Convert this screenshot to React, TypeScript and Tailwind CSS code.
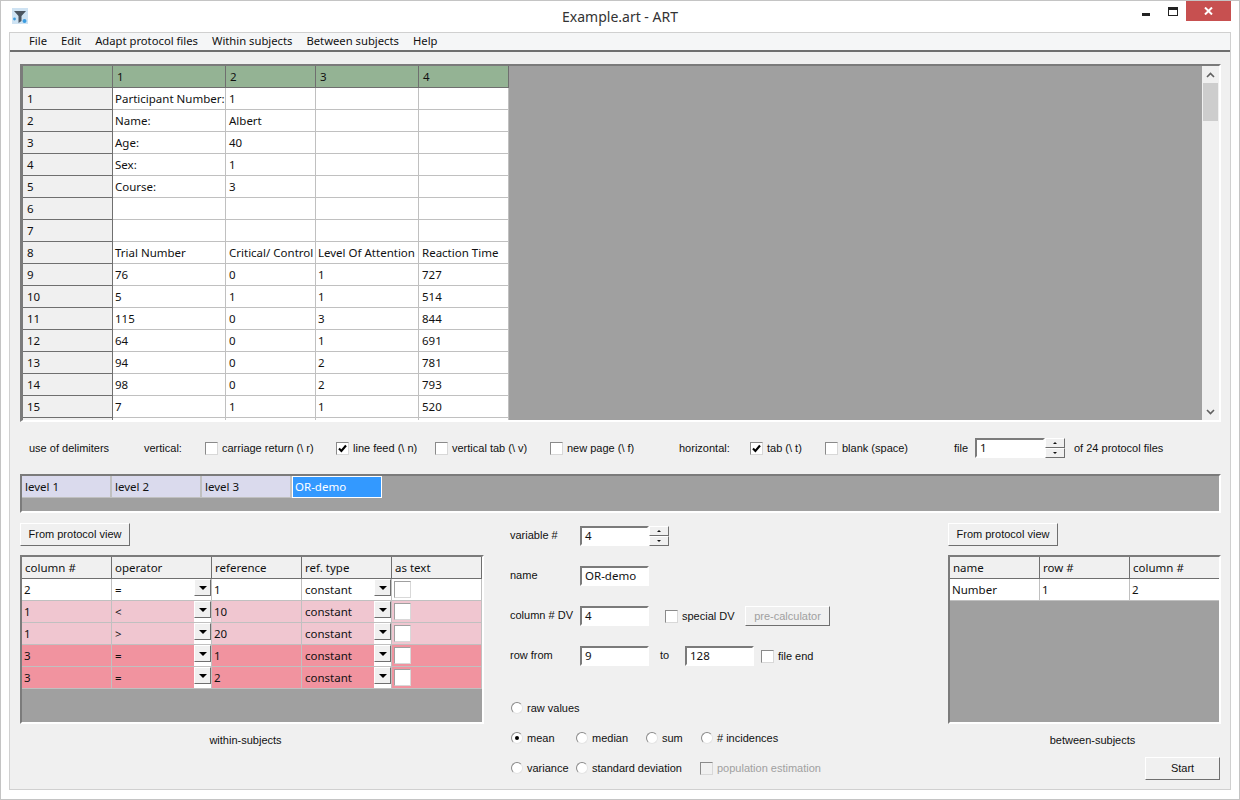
import type { ReactNode } from "react";

const font = "font-['Noto_Sans',sans-serif]";
const label = "font-['Liberation_Sans',sans-serif] text-[11px]";

const menus = ["File", "Edit", "Adapt protocol files", "Within subjects", "Between subjects", "Help"];

const protocolRows = [
  ["Participant Number:", "1", "", ""],
  ["Name:", "Albert", "", ""],
  ["Age:", "40", "", ""],
  ["Sex:", "1", "", ""],
  ["Course:", "3", "", ""],
  ["", "", "", ""],
  ["", "", "", ""],
  ["Trial Number", "Critical/ Control", "Level Of Attention", "Reaction Time"],
  ["76", "0", "1", "727"],
  ["5", "1", "1", "514"],
  ["115", "0", "3", "844"],
  ["64", "0", "1", "691"],
  ["94", "0", "2", "781"],
  ["98", "0", "2", "793"],
  ["7", "1", "1", "520"],
  ["", "", "", ""],
];

const conditions = [
  { col: "2", op: "=", ref: "1", bg: "bg-white" },
  { col: "1", op: "<", ref: "10", bg: "bg-[#f0c6d0]" },
  { col: "1", op: ">", ref: "20", bg: "bg-[#f0c6d0]" },
  { col: "3", op: "=", ref: "1", bg: "bg-[#f1939f]" },
  { col: "3", op: "=", ref: "2", bg: "bg-[#f1939f]" },
];

const sunken = "border-2 border-t-[#7b7b7b] border-l-[#7b7b7b] border-r-white border-b-white";
const raised = "border border-t-white border-l-white border-r-[#6f6f6f] border-b-[#6f6f6f]";

function Check({ on, disabled }: { on?: boolean; disabled?: boolean }) {
  return (
    <span
      className={`flex h-[13px] w-[13px] shrink-0 items-center justify-center border border-t-[#8a8a8a] border-l-[#8a8a8a] border-r-[#d8d8d8] border-b-[#d8d8d8] ${
        disabled ? "bg-[#f0f0f0]" : "bg-white"
      }`}
    >
      {on && (
        <svg viewBox="0 0 9 9" className="h-[9px] w-[9px]">
          <path d="M1 4.5 L3.4 7 L8 1.5" fill="none" stroke="#000" strokeWidth="2.1" />
        </svg>
      )}
    </span>
  );
}

function Radio({ on }: { on?: boolean }) {
  return (
    <span className="flex h-[12px] w-[12px] shrink-0 items-center justify-center rounded-full border border-t-[#8a8a8a] border-l-[#8a8a8a] border-r-[#e4e4e4] border-b-[#e4e4e4] bg-white">
      {on && <span className="h-[4px] w-[4px] rounded-full bg-black" />}
    </span>
  );
}

function Spin() {
  return (
    <div className="flex h-[20px] w-[20px] shrink-0 flex-col">
      {["M0 3 L2 1 L4 3", "M0 1 L2 3 L4 1"].map((d) => (
        <span key={d} className={`flex h-[10px] items-center justify-center bg-[#f0f0f0] ${raised}`}>
          <svg viewBox="0 0 4 4" className="h-[4px] w-[4px]">
            <path d={d} fill="#111" />
          </svg>
        </span>
      ))}
    </div>
  );
}

function Input({ value, w = "w-[69px]" }: { value: string; w?: string }) {
  return (
    <div className={`flex h-[20px] shrink-0 items-center bg-white pl-[3px] ${w} ${sunken}`}>{value}</div>
  );
}

function Button({ children, className }: { children: ReactNode; className: string }) {
  return (
    <button className={`flex items-center justify-center bg-[#f0f0f0] ${label} ${raised} ${className}`}>{children}</button>
  );
}

function Labeled({ box, text, w, muted }: { box: ReactNode; text: string; w: string; muted?: boolean }) {
  return (
    <div className={`flex shrink-0 items-center gap-[4px] ${w} ${muted ? "text-[#a0a0a0]" : ""}`}>
      {box}
      <span className={`whitespace-nowrap ${label}`}>{text}</span>
    </div>
  );
}

function Caption({ text, w }: { text: string; w: string }) {
  return <span className={`shrink-0 whitespace-nowrap ${label} ${w}`}>{text}</span>;
}

function ComboCell({ text, w }: { text: string; w: string }) {
  return (
    <div className={`relative flex shrink-0 items-center border-r border-b border-[#c0c0c0] pt-px pl-[3px] ${w}`}>
      {text}
      <span className="absolute top-0 right-0 h-full w-[17px] bg-white" />
      <span className={`absolute top-0 right-0 flex h-[17px] w-[17px] items-center justify-center bg-[#f0f0f0] ${raised}`}>
        <svg viewBox="0 0 8 4" className="h-[4px] w-[8px]">
          <path d="M0 0 H8 L4 4 Z" fill="#000" />
        </svg>
      </span>
    </div>
  );
}

function HeadCell({ text, w }: { text: string; w: string }) {
  return (
    <div className={`flex shrink-0 items-center border-r border-b border-[#6f6f6f] bg-[#f0f0f0] pl-[3px] ${w}`}>{text}</div>
  );
}

function ProtocolGrid() {
  const widths = ["w-[113px]", "w-[90px]", "w-[103px]", "w-[90px]"];
  const pads = ["pl-[2px]", "pl-[3px]", "pl-[2px]", "pl-[3px]"];
  return (
    <div className={`flex h-[358px] overflow-hidden bg-[#a0a0a0] ${sunken} border-l-[3px]`}>
      <div className="flex-1 overflow-hidden">
        <div className="flex h-[22px]">
          <div className="w-[90px] shrink-0 border-r border-b border-[#6f6f6f] bg-[#94b394]" />
          {["1", "2", "3", "4"].map((h, i) => (
            <div
              key={h}
              className={`flex shrink-0 items-center border-r border-b border-[#6f6f6f] bg-[#94b394] pl-[4px] ${widths[i]}`}
            >
              {h}
            </div>
          ))}
        </div>
        {protocolRows.map((row, r) => (
          <div key={r} className="flex h-[22px]">
            <div className="flex w-[90px] shrink-0 items-center border-r border-b border-[#6f6f6f] bg-[#f0f0f0] pl-[4px]">
              {r < 15 ? r + 1 : ""}
            </div>
            {row.map((cell, c) => (
              <div
                key={c}
                className={`flex shrink-0 items-center overflow-hidden whitespace-nowrap border-r border-b border-[#c0c0c0] bg-white ${pads[c]} ${widths[c]}`}
              >
                {cell}
              </div>
            ))}
          </div>
        ))}
      </div>
      <div className="flex w-[17px] shrink-0 flex-col bg-[#f0f0f0]">
        <div className="flex h-[17px] items-center justify-center">
          <svg viewBox="0 0 9 6" className="h-[6px] w-[9px]">
            <path d="M1 5 L4.5 1.5 L8 5" fill="none" stroke="#606060" strokeWidth="1.6" />
          </svg>
        </div>
        <div className="mx-px h-[38px] bg-[#cdcdcd]" />
        <div className="flex-1" />
        <div className="flex h-[17px] items-center justify-center">
          <svg viewBox="0 0 9 6" className="h-[6px] w-[9px]">
            <path d="M1 1 L4.5 4.5 L8 1" fill="none" stroke="#606060" strokeWidth="1.6" />
          </svg>
        </div>
      </div>
    </div>
  );
}

function DelimiterRow() {
  return (
    <div className="flex h-[52px] items-center pl-[9px]">
      <Caption w="w-[115px]" text="use of delimiters" />
      <Caption w="w-[61px]" text="vertical:" />
      <Labeled w="w-[131px]" box={<Check />} text="carriage return (\ r)" />
      <Labeled w="w-[99px]" box={<Check on />} text="line feed (\ n)" />
      <Labeled w="w-[115px]" box={<Check />} text="vertical tab (\ v)" />
      <Labeled w="w-[129px]" box={<Check />} text="new page (\ f)" />
      <Caption w="w-[71px]" text="horizontal:" />
      <Labeled w="w-[75px]" box={<Check on />} text="tab (\ t)" />
      <Labeled w="w-[129px]" box={<Check />} text="blank (space)" />
      <Caption w="w-[21px]" text="file" />
      <Input value="1" w="w-[70px]" />
      <Spin />
      <Caption w="ml-[9px]" text="of 24 protocol files" />
    </div>
  );
}

function LevelStrip() {
  return (
    <div className={`flex h-[39px] items-start bg-[#a0a0a0] ${sunken}`}>
      {["level 1", "level 2", "level 3"].map((l) => (
        <div key={l} className="flex h-[22px] w-[90px] items-center border-r-2 border-b border-[#c0c0c0] bg-[#dadaed] pl-[3px]">
          {l}
        </div>
      ))}
      <div className="flex h-[22px] w-[90px] items-center border border-white bg-[#3399ff] pl-[2px] text-white">OR-demo</div>
    </div>
  );
}

function WithinPanel() {
  return (
    <div className="w-[464px] shrink-0">
      <Button className="h-[23px] w-[110px]">From protocol view</Button>
      <div className={`mt-[9px] h-[169px] overflow-hidden bg-[#a0a0a0] ${sunken}`}>
        <div className="flex h-[22px]">
          <HeadCell text="column #" w="w-[90px]" />
          <HeadCell text="operator" w="w-[100px]" />
          <HeadCell text="reference" w="w-[90px]" />
          <HeadCell text="ref. type" w="w-[90px]" />
          <HeadCell text="as text" w="w-[90px]" />
        </div>
        {conditions.map((c, i) => (
          <div key={i} className={`flex h-[22px] ${c.bg}`}>
            <div className="flex w-[90px] shrink-0 items-center border-r border-b border-[#c0c0c0] pl-[2px]">{c.col}</div>
            <ComboCell text={c.op} w="w-[100px]" />
            <div className="flex w-[90px] shrink-0 items-center border-r border-b border-[#c0c0c0] pl-[2px]">{c.ref}</div>
            <ComboCell text="constant" w="w-[90px]" />
            <div className="flex w-[90px] shrink-0 items-start border-r border-b border-[#c0c0c0] pt-[2px] pl-[2px]">
              <span className="h-[17px] w-[17px] border border-[#d8d8d8] border-t-[#a0a0a0] border-l-[#a0a0a0] bg-white" />
            </div>
          </div>
        ))}
      </div>
      <div className={`mt-[11px] pr-[13px] text-center ${label}`}>within-subjects</div>
    </div>
  );
}

function VariablePanel() {
  return (
    <div className="ml-[26px] w-[438px] shrink-0 pt-[3px]">
      <div className="flex flex-col gap-[20px]">
        <div className="flex items-center">
          <Caption w="w-[70px] pb-[2px]" text="variable #" />
          <Input value="4" />
          <Spin />
        </div>
        <div className="flex items-center">
          <Caption w="w-[70px] pb-[2px]" text="name" />
          <Input value="OR-demo" />
        </div>
        <div className="flex items-center">
          <Caption w="w-[70px] pb-[2px]" text="column # DV" />
          <Input value="4" />
          <span className="w-[16px]" />
          <Labeled w="w-[80px]" box={<Check />} text="special DV" />
          <Button className="h-[20px] w-[85px] text-[#a0a0a0]">pre-calculator</Button>
        </div>
        <div className="flex items-center">
          <Caption w="w-[70px] pb-[2px]" text="row from" />
          <Input value="9" />
          <Caption w="ml-[11px] w-[25px] pb-[2px]" text="to" />
          <Input value="128" />
          <span className="w-[7px]" />
          <Labeled w="w-[80px]" box={<Check />} text="file end" />
        </div>
      </div>
      <div className="mt-[34px] flex flex-col gap-[14px]">
        <div className="flex h-[16px] items-center pl-px">
          <Labeled w="w-[65px]" box={<Radio />} text="raw values" />
        </div>
        <div className="flex h-[16px] items-center pl-px">
          <Labeled w="w-[65px]" box={<Radio on />} text="mean" />
          <Labeled w="w-[70px]" box={<Radio />} text="median" />
          <Labeled w="w-[55px]" box={<Radio />} text="sum" />
          <Labeled w="w-[90px]" box={<Radio />} text="# incidences" />
        </div>
        <div className="flex h-[16px] items-center pl-px">
          <Labeled w="w-[65px]" box={<Radio />} text="variance" />
          <Labeled w="w-[124px]" box={<Radio />} text="standard deviation" />
          <Labeled w="w-[130px]" muted box={<Check disabled />} text="population estimation" />
        </div>
      </div>
    </div>
  );
}

function BetweenPanel() {
  return (
    <div className="w-[273px] shrink-0">
      <Button className="h-[23px] w-[110px]">From protocol view</Button>
      <div className={`mt-[9px] h-[169px] overflow-hidden bg-[#a0a0a0] ${sunken}`}>
        <div className="flex h-[22px]">
          <HeadCell text="name" w="w-[90px]" />
          <HeadCell text="row #" w="w-[90px]" />
          <HeadCell text="column #" w="w-[90px]" />
        </div>
        <div className="flex h-[22px] bg-white">
          {["Number", "1", "2"].map((t) => (
            <div key={t} className="flex w-[90px] shrink-0 items-center border-r border-b border-[#c0c0c0] pl-[2px]">
              {t}
            </div>
          ))}
        </div>
      </div>
      <div className={`mt-[11px] pl-[16px] text-center ${label}`}>between-subjects</div>
      <div className="mt-[11px] flex justify-end pr-px">
        <Button className="h-[23px] w-[75px]">Start</Button>
      </div>
    </div>
  );
}

export default function App() {
  return (
    <div className={`flex h-[800px] w-[1240px] flex-col overflow-hidden border border-[#c4c4c4] bg-white text-[11.5px] leading-none text-[#111] ${font}`}>
      {/* title bar */}
      <div className="relative flex h-[31px] shrink-0 items-center justify-center text-[14px] text-[#333]">
        <svg viewBox="0 0 16 16" className="absolute top-[7px] left-[11px] h-[16px] w-[16px]">
          <rect width="16" height="16" fill="#cfe3f3" />
          <path d="M2 3 H14 L9.5 8 V13 L6.5 15 V8 Z" fill="#4a5560" />
          <circle cx="12.5" cy="13" r="2" fill="#3b9ce0" />
          <circle cx="2.5" cy="11" r="1.4" fill="#3b9ce0" />
        </svg>
        Example.art - ART
        <span className="absolute top-[12px] left-[1141px] h-[3px] w-[8px] bg-[#222]" />
        <span className="absolute top-[6px] left-[1167px] h-[9px] w-[10px] border border-t-[3px] border-[#222]" />
        <span className="absolute top-0 left-[1185px] flex h-[20px] w-[45px] items-center justify-center bg-[#c75050]">
          <svg viewBox="0 0 9 8" className="h-[8px] w-[9px]">
            <path d="M1 0.5 L8 7.5 M8 0.5 L1 7.5" stroke="#fff" strokeWidth="2" />
          </svg>
        </span>
      </div>

      {/* client area */}
      <div className="mx-[8px] flex h-[758px] shrink-0 flex-col border border-[#d0d0d0] bg-[#f0f0f0]">
        <div className="flex h-[19px] shrink-0 items-center gap-[14px] border-b-2 border-[#6f6f6f] bg-[#f5f6f7] pb-px pl-[19px] text-[11.25px]">
          {menus.map((m) => (
            <span key={m}>{m}</span>
          ))}
        </div>
        <div className="flex flex-col pt-[12px] pr-[9px] pl-[10px]">
          <ProtocolGrid />
          <DelimiterRow />
          <LevelStrip />
          <div className="mt-[10px] flex">
            <WithinPanel />
            <VariablePanel />
            <BetweenPanel />
          </div>
        </div>
      </div>
    </div>
  );
}
